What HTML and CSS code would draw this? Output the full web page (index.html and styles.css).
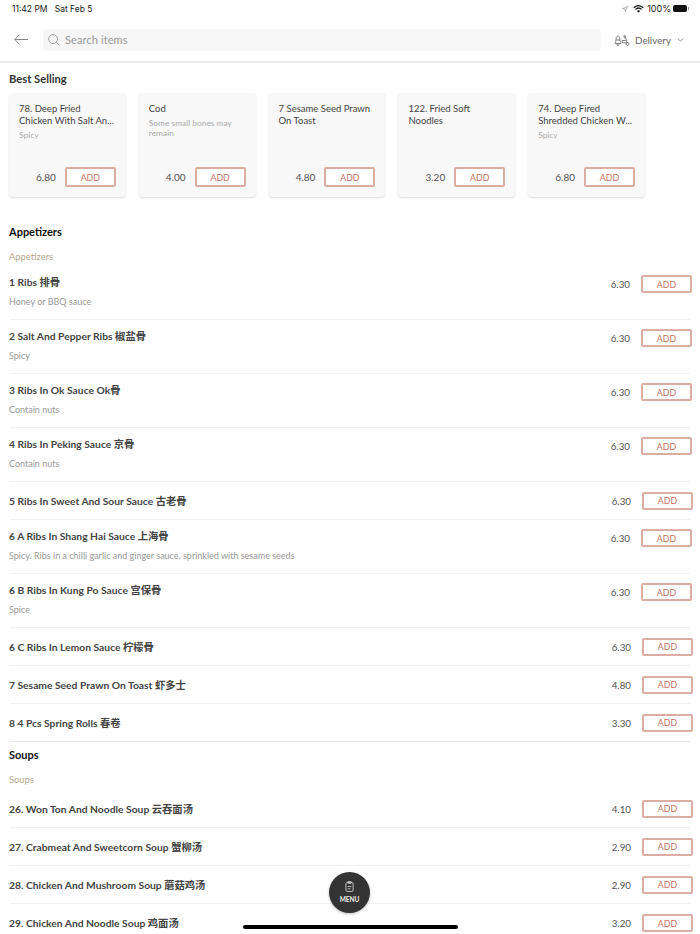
FILE: index.html
```html
<!DOCTYPE html>
<html lang="en">

<head>
    <meta charset="UTF-8">
    <title>Menu</title>
    <link rel="stylesheet" href="styles.css">
</head>

<body>

    <div class="statusBar">
        <div class="statusTime">11:42 PM&nbsp;&nbsp; Sat Feb 5</div>
        <div class="statusRight">
            <svg class="iconArrow" viewBox="0 0 8 8"><path d="M7.500 .5 .8 3.600 4 4 4.500 7.200Z" fill="none" stroke="#777" stroke-width=".7"/></svg>
            <svg class="iconWifi" viewBox="0 0 14 10"><path d="M1 3.400C4.600 .2 9.400 .2 13 3.400M3 5.500C5.400 3.400 8.600 3.400 11 5.500" fill="none" stroke="#111" stroke-width="1.600"/><path d="M7 9.600 4.900 7.400C6.100 6.500 7.900 6.500 9.100 7.400Z" fill="#111"/></svg>
            <span>100%</span>
            <div class="battery"></div>
        </div>
    </div>

    <header class="topBar">
        <svg class="backIcon" viewBox="0 0 14 11"><path d="M14 5.500H.8M5.500 .6.800 5.500 5.500 10.400" fill="none" stroke="#777" stroke-width=".9"/></svg>
        <div class="searchBox">
            <svg class="searchIcon" viewBox="0 0 13 13"><circle cx="5.500" cy="5.500" r="4.800" fill="none" stroke="#999" stroke-width="1"/><path d="M9 9l3.500 3.500" stroke="#999" stroke-width="1"/></svg>
            <span>Search items</span>
        </div>
        <div class="deliveryBox">
            <svg class="scooterIcon" viewBox="0 0 16 11"><g fill="none" stroke="#666" stroke-width=".8"><path d="M1 8.500C1 7.500 1.300 6.800 1.800 6.300L2.200 3C2.400 .6 5.600 .6 5.800 3L6.200 6.300C6.700 6.800 7 7.500 7 8.500Z"/><path d="M2 5H6"/><circle cx="4" cy="9.500" r="1.100"/><path d="M9.500 .8H11.300L12.800 7.800H8.500L8 5.500H11.800"/><path d="M10 .8 10.500 3.500"/><circle cx="13.500" cy="9" r="1.500"/></g></svg>
            <span>Delivery</span>
            <svg class="chevron" viewBox="0 0 8 5"><path d="M.5.500 4 4 7.500.500" fill="none" stroke="#666" stroke-width=".9"/></svg>
        </div>
    </header>

    <section class="bestSelling">
        <h2 class="bestTitle">Best Selling</h2>
        <div class="cards">
            <div class="card">
                <div class="cardName">78. Deep Fried<br>Chicken With Salt An...</div>
                <div class="cardDesc">Spicy</div>
                <div class="cardBottom"><span>6.80</span><a class="addBtn">ADD</a></div>
            </div>
            <div class="card">
                <div class="cardName">Cod</div>
                <div class="cardDesc">Some small bones may<br>remain</div>
                <div class="cardBottom"><span>4.00</span><a class="addBtn">ADD</a></div>
            </div>
            <div class="card">
                <div class="cardName">7 Sesame Seed Prawn<br>On Toast</div>
                <div class="cardBottom"><span>4.80</span><a class="addBtn">ADD</a></div>
            </div>
            <div class="card">
                <div class="cardName">122. Fried Soft<br>Noodles</div>
                <div class="cardBottom"><span>3.20</span><a class="addBtn">ADD</a></div>
            </div>
            <div class="card">
                <div class="cardName">74. Deep Fired<br>Shredded Chicken W...</div>
                <div class="cardDesc">Spicy</div>
                <div class="cardBottom"><span>6.80</span><a class="addBtn">ADD</a></div>
            </div>
        </div>
    </section>

    <section class="category">
        <h2 class="catTitle">Appetizers</h2>
        <div class="catSub">Appetizers</div>
        <div class="row desc">
            <div><div class="rowName">1 Ribs 排骨</div><div class="rowDesc">Honey or BBQ sauce</div></div>
            <div class="rowRight"><span>6.30</span><a class="addBtn">ADD</a></div>
        </div>
        <div class="row desc">
            <div><div class="rowName">2 Salt And Pepper Ribs 椒盐骨</div><div class="rowDesc">Spicy</div></div>
            <div class="rowRight"><span>6.30</span><a class="addBtn">ADD</a></div>
        </div>
        <div class="row desc">
            <div><div class="rowName">3 Ribs In Ok Sauce Ok骨</div><div class="rowDesc">Contain nuts</div></div>
            <div class="rowRight"><span>6.30</span><a class="addBtn">ADD</a></div>
        </div>
        <div class="row desc">
            <div><div class="rowName">4 Ribs In Peking Sauce 京骨</div><div class="rowDesc">Contain nuts</div></div>
            <div class="rowRight"><span>6.30</span><a class="addBtn">ADD</a></div>
        </div>
        <div class="row plain">
            <div class="rowName">5 Ribs In Sweet And Sour Sauce 古老骨</div>
            <div class="rowRight"><span>6.30</span><a class="addBtn">ADD</a></div>
        </div>
        <div class="row desc">
            <div><div class="rowName">6 A Ribs In Shang Hai Sauce 上海骨</div><div class="rowDesc">Spicy. Ribs in a chilli garlic and ginger sauce, sprinkled with sesame seeds</div></div>
            <div class="rowRight"><span>6.30</span><a class="addBtn">ADD</a></div>
        </div>
        <div class="row desc">
            <div><div class="rowName">6 B Ribs In Kung Po Sauce 宫保骨</div><div class="rowDesc">Spice</div></div>
            <div class="rowRight"><span>6.30</span><a class="addBtn">ADD</a></div>
        </div>
        <div class="row plain">
            <div class="rowName">6 C Ribs In Lemon Sauce 柠檬骨</div>
            <div class="rowRight"><span>6.30</span><a class="addBtn">ADD</a></div>
        </div>
        <div class="row plain">
            <div class="rowName">7 Sesame Seed Prawn On Toast 虾多士</div>
            <div class="rowRight"><span>4.80</span><a class="addBtn">ADD</a></div>
        </div>
        <div class="row plain">
            <div class="rowName">8 4 Pcs Spring Rolls 春卷</div>
            <div class="rowRight"><span>3.30</span><a class="addBtn">ADD</a></div>
        </div>
    </section>

    <section class="category soups">
        <h2 class="catTitle">Soups</h2>
        <div class="catSub">Soups</div>
        <div class="row plain">
            <div class="rowName">26. Won Ton And Noodle Soup 云吞面汤</div>
            <div class="rowRight"><span>4.10</span><a class="addBtn">ADD</a></div>
        </div>
        <div class="row plain">
            <div class="rowName">27. Crabmeat And Sweetcorn Soup 蟹柳汤</div>
            <div class="rowRight"><span>2.90</span><a class="addBtn">ADD</a></div>
        </div>
        <div class="row plain">
            <div class="rowName">28. Chicken And Mushroom Soup 蘑菇鸡汤</div>
            <div class="rowRight"><span>2.90</span><a class="addBtn">ADD</a></div>
        </div>
        <div class="row plain">
            <div class="rowName">29. Chicken And Noodle Soup 鸡面汤</div>
            <div class="rowRight"><span>3.20</span><a class="addBtn">ADD</a></div>
        </div>
    </section>

    <div class="menuBtn">
        <svg class="menuIcon" viewBox="0 0 10 12"><g fill="none" stroke="#ddd" stroke-width=".9"><rect x="1" y="1.500" width="8" height="10" rx="1.500"/><rect x="3" y=".5" width="4" height="2" rx=".6"/><path d="M3 6H7M3 8.500H6"/></g></svg>
        <span>MENU</span>
    </div>
    <div class="homeBar"></div>

</body>

</html>
```
FILE: styles.css
```css
html {
    height: 100%;
    overflow: hidden;
}

body {
    margin: 0;
    height: 934px;
    overflow: hidden;
    position: relative;
    background-color: #fff;
    color: #333;
    font-family: "Lato", "Noto Sans CJK SC", sans-serif;
}

/* status bar */
.statusBar {
    height: 16px;
    padding: 1px 11px 0 12px;
    box-sizing: border-box;
    display: flex;
    justify-content: space-between;
    align-items: center;
    font-family: "Inter", sans-serif;
    font-size: 8.500px;
    color: #222;
}

.statusRight {
    display: flex;
    align-items: center;
    gap: 3px;
    font-size: 9px;
}

.iconArrow {
    width: 6px;
    height: 6px;
    margin-right: 2px;
}

.iconWifi {
    width: 11px;
    height: 8px;
}

.battery {
    width: 14px;
    height: 7px;
    border-radius: 2px;
    background-color: #111;
    margin-left: -1px;
    margin-right: 2px;
    position: relative;
}

.battery::after {
    content: "";
    position: absolute;
    left: 15px;
    top: 2px;
    width: 1px;
    height: 3px;
    background-color: #999;
}

/* header */
.topBar {
    height: 47px;
    box-sizing: border-box;
    padding: 13px 0 0 14px;
    display: flex;
    align-items: flex-start;
    border-bottom: 2px solid #e9e9e9;
}

.backIcon {
    width: 14px;
    height: 11px;
    margin-top: 5px;
    flex: none;
}

.searchBox {
    width: 558px;
    height: 22px;
    margin-left: 15px;
    flex: none;
    padding: 0 0 2px 5px;
    box-sizing: border-box;
    background-color: #f6f6f6;
    border-radius: 3px;
    display: flex;
    align-items: center;
    gap: 5px;
    font-size: 11px;
    letter-spacing: .1px;
    color: #999;
}

.searchIcon {
    width: 12px;
    height: 12px;
    margin-top: 2px;
}

.deliveryBox {
    margin-left: 13px;
    height: 22px;
    display: flex;
    align-items: center;
    font-size: 9.800px;
    color: #666;
}

.scooterIcon {
    width: 16px;
    height: 11px;
    margin-right: 5px;
}

.chevron {
    width: 7px;
    height: 4px;
    margin-left: 6px;
}

/* best selling */
.bestSelling {
    padding: 9px 0 0 9px;
}

.bestTitle {
    margin: 0;
    font-size: 11.200px;
    line-height: 14px;
    font-weight: 700;
    color: #333;
}

.cards {
    margin-top: 7px;
    display: flex;
    gap: 13px;
}

.card {
    width: 116.800px;
    height: 104px;
    box-sizing: border-box;
    padding: 10px 10px 0;
    background-color: #f8f8f8;
    border-radius: 4px;
    box-shadow: 0 1px 2px rgba(0, 0, 0, .14);
    display: flex;
    flex-direction: column;
}

.cardName {
    font-size: 9.500px;
    line-height: 12px;
    color: #444;
    white-space: nowrap;
}

.cardDesc {
    margin-top: 3px;
    font-size: 8.400px;
    line-height: 10px;
    color: #aaa;
}

.cardBottom {
    margin-top: auto;
    margin-bottom: 10px;
    display: flex;
    justify-content: flex-end;
    align-items: center;
    gap: 9px;
    font-size: 10px;
    color: #555;
}

.addBtn {
    width: 51px;
    height: 20px;
    box-sizing: border-box;
    border: 2px solid #dcaea3;
    border-radius: 2px;
    display: flex;
    align-items: center;
    justify-content: center;
    font-size: 8.800px;
    color: #c9705f;
    background-color: #fff;
    flex: none;
}

/* menu list */
.category {
    padding: 28px 0 0 9px;
}

.catTitle {
    margin: 0;
    font-size: 11px;
    line-height: 14px;
    font-weight: 700;
    color: #111;
}

.catSub {
    margin-top: 11px;
    height: 16px;
    font-size: 9.400px;
    line-height: 14px;
    color: #b5a98f;
}

.row {
    box-sizing: border-box;
    margin-left: 1px;
    width: 680px;
    display: flex;
    justify-content: space-between;
    border-bottom: 1px solid #f1f1f1;
}

.row.desc {
    height: 54px;
    padding-top: 9px;
    align-items: flex-start;
}

.row.plain {
    height: 38px;
    align-items: center;
}

.row:last-child {
    border-bottom-color: #e8e8e8;
}

.soups {
    padding-top: 6px;
}

.soups .catSub {
    height: 17px;
}

.soups .row:last-child {
    border-bottom: 0;
}

.rowName {
    margin-left: -1px;
    font-size: 10.300px;
    line-height: 14px;
    font-weight: 700;
    color: #444;
}

.rowDesc {
    margin-left: -1px;
    margin-top: 6px;
    font-size: 9px;
    line-height: 14px;
    color: #999;
}

.rowRight {
    display: flex;
    align-items: center;
    gap: 11px;
    font-size: 9.800px;
    color: #555;
    margin-right: -3px;
}

.rowRight .addBtn {
    height: 18px;
}

.desc .rowRight {
    margin-right: -2px;
}

/* floating menu button */
.menuBtn {
    position: absolute;
    left: 329px;
    top: 872px;
    width: 41px;
    height: 41px;
    border-radius: 50%;
    background-color: #333;
    box-shadow: 0 1px 3px rgba(0, 0, 0, .25);
    display: flex;
    flex-direction: column;
    align-items: center;
    padding-top: 9px;
    box-sizing: border-box;
    color: #eee;
    font-size: 6.500px;
    font-weight: 700;
}

.menuIcon {
    width: 9px;
    height: 11px;
    margin-bottom: 4px;
}

.homeBar {
    position: absolute;
    left: 243px;
    top: 924.500px;
    width: 215px;
    height: 4px;
    border-radius: 2px;
    background-color: #000;
}
```
